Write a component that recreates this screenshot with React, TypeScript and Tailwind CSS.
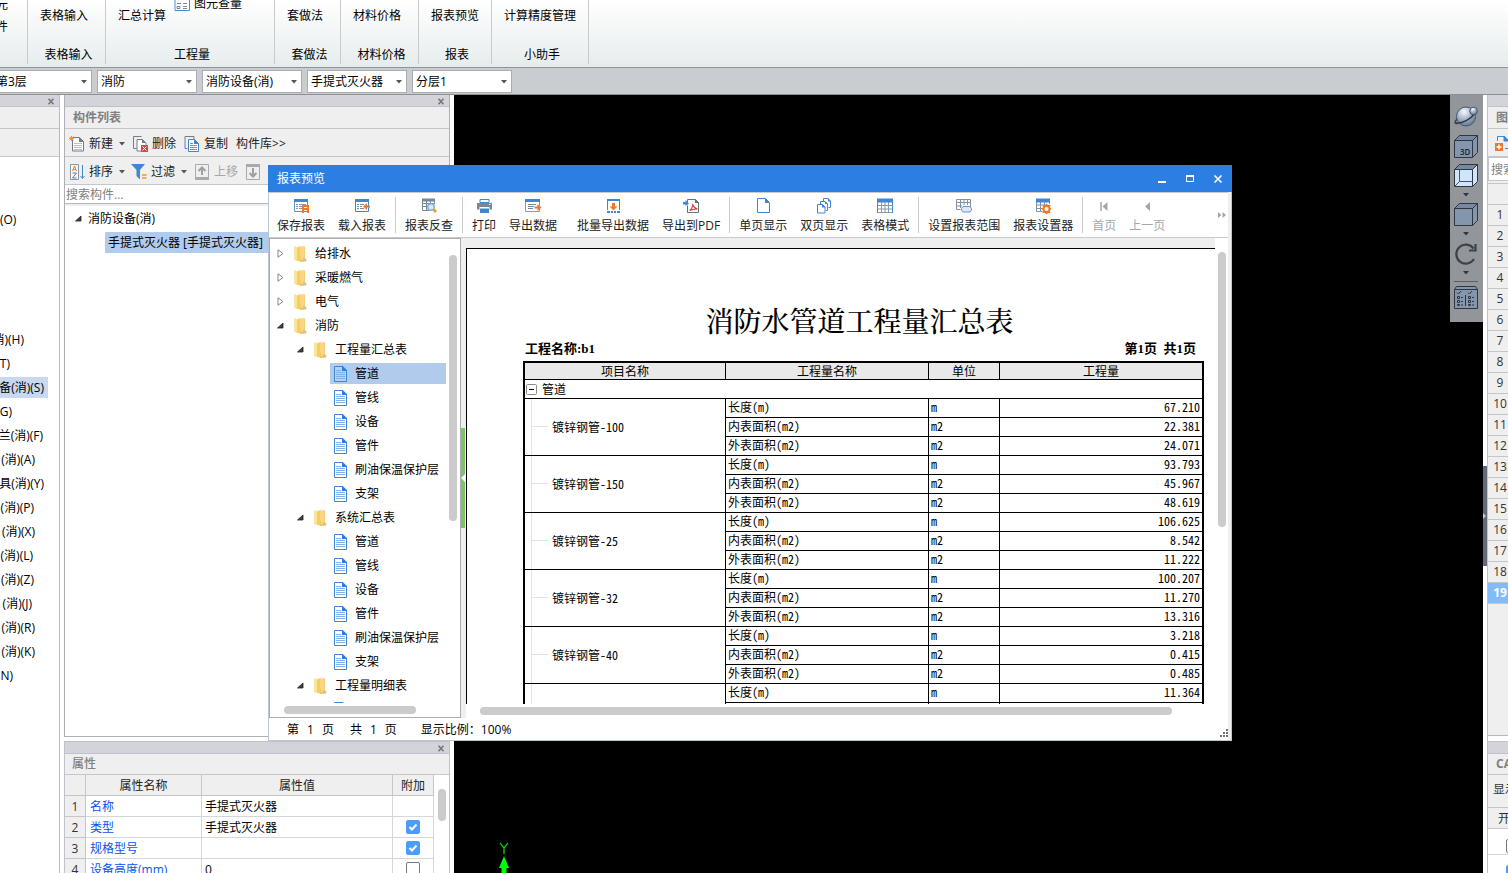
import { Fragment } from 'react';
import type { ReactNode } from 'react';
import clsx from 'clsx';

interface RibbonGroup {
  item: string;
  label: string;
  width: string;
}

interface CategoryRow {
  text: string;
  end: number;
  selected?: boolean;
}

interface TreeNode {
  level: 0 | 1 | 2;
  text: string;
  open?: boolean;
  selected?: boolean;
}

interface PipeGroup {
  name: string;
  values: string[];
}

const ribbonGroups: RibbonGroup[] = [
  { item: '表格输入', label: '表格输入', width: 'w-[78px]' },
  { item: '汇总计算', label: '工程量', width: 'w-[169px]' },
  { item: '套做法', label: '套做法', width: 'w-[66px]' },
  { item: '材料价格', label: '材料价格', width: 'w-[78px]' },
  { item: '报表预览', label: '报表', width: 'w-[73px]' },
  { item: '计算精度管理', label: '小助手', width: 'w-[97px]' },
];

const filters = ['第3层', '消防', '消防设备(消)', '手提式灭火器', '分层1'];

// The navigator is scrolled sideways, so only the tail of each name shows
const categories: CategoryRow[] = [
  { text: '消)(H)', end: 24 },
  { text: 'T)', end: 10 },
  { text: '备(消)(S)', end: 44, selected: true },
  { text: 'G)', end: 12 },
  { text: '兰(消)(F)', end: 43 },
  { text: '(消)(A)', end: 35 },
  { text: '具(消)(Y)', end: 44 },
  { text: '(消)(P)', end: 34 },
  { text: '(消)(X)', end: 35 },
  { text: '(消)(L)', end: 33 },
  { text: '(消)(Z)', end: 34 },
  { text: '(消)(J)', end: 32 },
  { text: '(消)(R)', end: 35 },
  { text: '(消)(K)', end: 35 },
  { text: 'N)', end: 13 },
];

const reportTree: TreeNode[] = [
  { level: 0, text: '给排水' },
  { level: 0, text: '采暖燃气' },
  { level: 0, text: '电气' },
  { level: 0, text: '消防', open: true },
  { level: 1, text: '工程量汇总表', open: true },
  { level: 2, text: '管道', selected: true },
  { level: 2, text: '管线' },
  { level: 2, text: '设备' },
  { level: 2, text: '管件' },
  { level: 2, text: '刷油保温保护层' },
  { level: 2, text: '支架' },
  { level: 1, text: '系统汇总表', open: true },
  { level: 2, text: '管道' },
  { level: 2, text: '管线' },
  { level: 2, text: '设备' },
  { level: 2, text: '管件' },
  { level: 2, text: '刷油保温保护层' },
  { level: 2, text: '支架' },
  { level: 1, text: '工程量明细表', open: true },
  { level: 2, text: '' },
];

const measures = [
  { name: '长度(m)', unit: 'm' },
  { name: '内表面积(m2)', unit: 'm2' },
  { name: '外表面积(m2)', unit: 'm2' },
];

const pipes: PipeGroup[] = [
  { name: '镀锌钢管-100', values: ['67.210', '22.381', '24.071'] },
  { name: '镀锌钢管-150', values: ['93.793', '45.967', '48.619'] },
  { name: '镀锌钢管-25', values: ['106.625', '8.542', '11.222'] },
  { name: '镀锌钢管-32', values: ['100.207', '11.270', '13.316'] },
  { name: '镀锌钢管-40', values: ['3.218', '0.415', '0.485'] },
];

const properties = [
  { name: '名称', value: '手提式灭火器', extra: null },
  { name: '类型', value: '手提式灭火器', extra: true },
  { name: '规格型号', value: '', extra: true },
  { name: '设备高度(mm)', value: '0', extra: false },
];

function Caret({ className = 'fill-[#555]' }: { className?: string }) {
  return (
    <svg width="6" height="4" viewBox="0 0 6 4" className={className}>
      <path d="M0 0h6L3 3.5z" />
    </svg>
  );
}

function SmallX() {
  return (
    <svg width="8" height="7" viewBox="0 0 8 7" className="stroke-[#777]" fill="none" strokeWidth="1.6">
      <path d="M1.5 .8l5 5.400M6.500 .8l-5 5.400" />
    </svg>
  );
}

function CheckBox({ label, checked }: { label: string; checked: boolean }) {
  return (
    <div className="relative size-[14px] shrink-0">
      <input
        type="checkbox"
        aria-label={label}
        defaultChecked={checked}
        className="peer block size-[14px] appearance-none rounded-xs border border-[#777] bg-white checked:border-[#4a9df8] checked:bg-[#4a9df8]"
      />
      <svg
        width="14"
        height="14"
        viewBox="0 0 14 14"
        fill="none"
        className="pointer-events-none absolute top-0 left-0 hidden stroke-white stroke-2 peer-checked:block"
      >
        <path d="M3.500 7l2.500 2.500L10.500 4.500" />
      </svg>
    </div>
  );
}

function PanelStrip() {
  return (
    <div className="flex h-3 shrink-0 items-center justify-end border-b border-[#bfc2c9] bg-[#d3d4d9] pt-px pr-1">
      <button aria-label="关闭">
        <SmallX />
      </button>
    </div>
  );
}

function TreeArrow({ open }: { open?: boolean }) {
  return (
    <svg width="7" height="9" viewBox="0 0 7 9" className="shrink-0">
      {open ? (
        <path d="M6 2v5H.5z" fill="#404040" stroke="#222" strokeWidth=".8" />
      ) : (
        <path d="M1 .8v7.4l5-3.7z" fill="#fff" stroke="#858585" />
      )}
    </svg>
  );
}

function FolderIcon() {
  return (
    <svg width="13" height="16" viewBox="0 0 13 16" className="shrink-0">
      <path d="M4 .5h7v11.500l1.500 2-.5 1.500-6 .5z" fill="#eec36a" />
      <path d="M5 1h5.500v10.500L7 15z" fill="#fbd582" />
      <path d="M.5 .5L6 2v13.500L.5 14z" fill="#f3d066" />
      <path d="M.5 .5L3 1.200v13.400L.5 14z" fill="#fae794" />
      <path d="M10.500 11.500l2 3.500H8.500z" fill="#d3c293" />
    </svg>
  );
}

function DocIcon({ selected }: { selected?: boolean }) {
  return (
    <svg width="13" height="16" viewBox="0 0 13 16" className="shrink-0" fill="none">
      <path d="M.5.5H8.5l4 4v11H.5z" fill={selected ? '#b4d0f2' : '#fff'} stroke="#3f86d3" />
      <path d="M8 0h.8L13 4.2V5H8z" fill="#2f7fd6" />
      <path d="M2 4.5h5M2 6.5h9M2 8.5h9M2 10.5h9M2 12.5h9" stroke="#7fb0e6" />
    </svg>
  );
}

const reportIcons: Record<string, ReactNode> = {
  save: (
    <>
      <path d="M1.5 1.5h13v12h-13z" stroke="#6f8faf" />
      <path d="M1 2.5h14" stroke="#3f86d3" strokeWidth="3" />
      <path d="M3 6.5h2M6 6.5h7M3 8.5h2M6 8.5h4M3 10.5h2M6 10.5h3" stroke="#8b98a5" />
      <path d="M9 7h7v8h-2v-3h-3v3H9z" fill="#f0782a" />
      <path d="M11 9.5h3" stroke="#fff" />
    </>
  ),
  load: (
    <>
      <path d="M1.5 1.5h13v12h-13z" stroke="#3f86d3" />
      <path d="M1 2.5h14" stroke="#3f86d3" strokeWidth="3" />
      <path d="M3 6.5h2M6 6.5h4M3 8.5h2M6 8.5h2M3 10.5h2M6 10.5h4" stroke="#7b8794" />
      <path d="M9 8.5L13 5v2.5h3v2h-3V12z" fill="#f0782a" />
    </>
  ),
  check: (
    <>
      <path d="M1 2h13" stroke="#7b8794" strokeWidth="3" />
      <path d="M1.5 1v11.500h7M5.500 3v9M9.500 3v3M13.500 3v3M1 5.500h13M1 8.500h5" stroke="#7b8794" />
      <circle cx="10" cy="9" r="3.300" fill="#dbe9fa" stroke="#7fa8de" strokeWidth="1.400" />
      <path d="M13.500 10.500l2.500 2.500-2 2-2.500-2.500z" fill="#f5961d" />
    </>
  ),
  print: (
    <>
      <path d="M4 1.500h9v3H4z" stroke="#3f86d3" />
      <path d="M1 5h15v6.500h-2.500V9h-10v2.500H1z" fill="#7b8794" />
      <path d="M4 10.500h9v4.500H4z" fill="#3f86d3" />
      <path d="M13 6.500h1.500" stroke="#fff" />
    </>
  ),
  exportData: (
    <>
      <path d="M.5 1.500h14v12H.5z" stroke="#6fa3df" />
      <path d="M0 2.500h15" stroke="#3f86d3" strokeWidth="3" />
      <path d="M3 6.500h8M3 8.500h6M3 10.500h5" stroke="#7b8794" />
      <path d="M16.500 9.500L12.500 6v2.500h-3v2h3V13z" fill="#f0782a" />
    </>
  ),
  exportBatch: (
    <>
      <path d="M2.500 1v11M14.500 1v11" stroke="#3f86d3" />
      <path d="M2 2h13" stroke="#3f86d3" strokeWidth="2" />
      <path d="M2 14h3M6 14h2M9 14h2M12 14h3" stroke="#3f86d3" strokeWidth="2" />
      <path d="M8.500 12.500l4-4h-2.500V5H7v3.500H4.500z" fill="#f0782a" />
    </>
  ),
  pdf: (
    <>
      <path d="M4.500 7.500v7h11V4.500l-3-3H4.500V4" stroke="#6a6f76" />
      <path d="M12 1v4h4z" fill="#6a6f76" />
      <path d="M0 4h2.500V2L6 5.500 2.500 8V6.500H0z" fill="#3f86d3" />
      <path d="M6.500 12.500c2-1 3.500-4 3-6.500 1 3 2.500 4.500 5 4.800-2.500 0-5.500.3-8 1.700z" stroke="#e0454a" strokeWidth="1.200" />
    </>
  ),
  single: (
    <>
      <path d="M2.500.500h8l4 4v10h-12z" stroke="#3f86d3" />
      <path d="M10 0l5 5h-5z" fill="#3f86d3" />
    </>
  ),
  double: (
    <>
      <path d="M7.500 3V.500h4.500l2.500 2.500v6.500h-2" stroke="#3f86d3" />
      <path d="M4.500 6V3.500H9l2.500 2.500v6.500H10" stroke="#3f86d3" />
      <path d="M1.500 6.500h5l2.500 2.500v6H1.500z" fill="#fff" stroke="#3f86d3" />
      <path d="M6 6l4 3.500H6zM9 3l3 3H9zM12 0l3 3.500h-3z" fill="#3f86d3" />
    </>
  ),
  grid: (
    <>
      <path d="M4.500 4v10M8 4v10M11.500 4v10M1 7.500h14M1 11h14M0 14.500h16" stroke="#8b98a5" />
      <path d="M.5 1v14M15.500 1v14" stroke="#3f86d3" />
      <path d="M0 2.500h16" stroke="#3f86d3" strokeWidth="4" />
    </>
  ),
  range: (
    <>
      <path d="M.5 1.500h14v8M.5 1.500v10h4M4.500 1v9M8 1v6M11.500 1v6M1 4.500h14M1 8h5" stroke="#8290a0" />
      <path d="M7 8.500h7l1.500 2v1.500l-1.500 2H7l-1.500-2v-1.500z" fill="#dbe9fa" stroke="#5f98dc" />
    </>
  ),
  settings: (
    <>
      <path d="M1.500 3v10.500h6M5.500 4v9M9.500 4v4M14.500 3v3M1 7h9M1 10.500h6" stroke="#8290a0" />
      <path d="M1 2.500h14" stroke="#3f86d3" strokeWidth="4" />
      <path d="M11.500 5.500l1.500 1.500h2.500l-.5 2.300L16.500 11l-1.500 1.500.5 2.500H13l-1.500 1.500L10 15H7.500l.5-2.500L6.500 11 8 9.300 7.500 7H10z" fill="#f0782a" />
      <circle cx="11.500" cy="11" r="2" fill="#fff" />
    </>
  ),
  first: (
    <>
      <path d="M5 4v9" stroke="#a3a7ab" strokeWidth="1.500" />
      <path d="M11.500 4v9L6.500 8.500z" fill="#a3a7ab" />
    </>
  ),
  previous: <path d="M11 4v9L6 8.500z" fill="#a3a7ab" />,
};

// 'sep' draws a divider, 'space' leaves a small hole in the bar
const reportTools: { icon: string; text?: string; disabled?: boolean }[] = [
  { icon: 'save', text: '保存报表' },
  { icon: 'load', text: '载入报表' },
  { icon: 'sep' },
  { icon: 'check', text: '报表反查' },
  { icon: 'sep' },
  { icon: 'print', text: '打印' },
  { icon: 'exportData', text: '导出数据' },
  { icon: 'space' },
  { icon: 'exportBatch', text: '批量导出数据' },
  { icon: 'pdf', text: '导出到PDF' },
  { icon: 'sep' },
  { icon: 'single', text: '单页显示' },
  { icon: 'double', text: '双页显示' },
  { icon: 'grid', text: '表格模式' },
  { icon: 'sep' },
  { icon: 'range', text: '设置报表范围' },
  { icon: 'settings', text: '报表设置器' },
  { icon: 'sep' },
  { icon: 'first', text: '首页', disabled: true },
  { icon: 'previous', text: '上一页', disabled: true },
];

function Ribbon() {
  return (
    <header className="flex h-[68px] shrink-0 border-b border-[#8f949a] bg-linear-to-b from-white to-[#e6ecec]">
      <div className="mb-[3px] w-7 overflow-hidden border-r border-[#c8cacc] leading-[22px]">
        <div className="-mt-1.5 -ml-1">元</div>
        <div className="-ml-1">件</div>
      </div>
      {ribbonGroups.map((group, index) => (
        <div
          key={group.label}
          className={clsx('mb-[3px] flex shrink-0 flex-col justify-between border-r border-[#c8cacc]', group.width)}
        >
          <div className="flex gap-2 pl-3">
            <button className="mt-[7px] flex h-[18px] items-center whitespace-nowrap">{group.item}</button>
            {index === 1 && (
              <button className="-mt-1.5 flex h-5 items-center gap-1">
                <svg width="16" height="14" viewBox="0 0 16 14" fill="none">
                  <path d="M1 .5h14.500v13H1z" fill="#fff" stroke="#4a8fd8" />
                  <path d="M3 6.500h4M9 6.500h4M3 9.500h3v2H3zM9 9.500h4M9 11.500h4" stroke="#7b8794" />
                </svg>
                图元查量
              </button>
            )}
          </div>
          <div className="flex h-[19px] items-center justify-center pl-1">{group.label}</div>
        </div>
      ))}
    </header>
  );
}

function FilterBar() {
  return (
    <div className="flex h-[27px] shrink-0 items-center border-b border-[#8c9095] bg-[#c9cdd2]">
      <div className="-ml-2 flex gap-[5px]">
        {filters.map(name => (
          <div key={name} className="relative">
            <select
              aria-label={name}
              className="block h-[23px] w-[100px] appearance-none border border-[#a9acb0] bg-white pt-0.5 pl-[3px] text-xs outline-none"
            >
              <option>{name}</option>
            </select>
            <span className="pointer-events-none absolute top-[10px] right-[5px]">
              <Caret />
            </span>
          </div>
        ))}
      </div>
    </div>
  );
}

function Navigator() {
  return (
    <aside className="flex w-[60px] shrink-0 flex-col overflow-hidden border-r border-[#b9bcc2] bg-white">
      <PanelStrip />
      <div className="h-[22px] shrink-0 border-b border-[#c3c6ca] bg-[#efefef]" />
      <div className="h-7 shrink-0 border-b border-[#c3c6ca] bg-[#efefef]" />
      <div className="mt-[52px] h-[21px] shrink-0 leading-[21px]">(O)</div>
      <ul className="mt-[99px] flex flex-col gap-[3px]">
        {categories.map(row => (
          <li
            key={row.text}
            className={clsx(
              'flex h-[21px] shrink-0 items-center justify-end pr-1 whitespace-nowrap',
              row.selected && 'bg-[#c8d8ee]'
            )}
            style={{ width: row.end + 4 }}
          >
            {row.text}
          </li>
        ))}
      </ul>
    </aside>
  );
}

function ComponentList() {
  return (
    <section className="flex h-[642px] shrink-0 flex-col border border-t-0 border-[#aeb0b4] bg-white text-[#222]">
      <PanelStrip />
      <h2 className="flex h-[22px] shrink-0 items-center border-b border-[#c3c6ca] bg-[#efefef] pl-2 font-bold text-[#808080]">
        构件列表
      </h2>
      <div className="flex h-7 shrink-0 items-center border-b border-[#c3c6ca] bg-[#efefef] pt-0.5 pl-1">
        <button className="flex items-center gap-1">
          <svg width="16" height="16" viewBox="0 0 16 16" fill="none">
            <path d="M3.500 1.500h7l4 4v9.500h-11z" fill="#fff" stroke="#737e8a" />
            <path d="M10 1l5 5h-5z" fill="#737e8a" />
            <path d="M5 7.500h8M5 9.500h8M5 11.500h8M5 13.500h8" stroke="#b9c0c7" />
            <path d="M2.500 0v5M0 2.500h5M.7.700l3.600 3.600M4.300.700L.7 4.300" stroke="#f5961d" />
          </svg>
          新建
        </button>
        <span className="ml-1.5">
          <Caret />
        </span>
        <button className="ml-2 flex items-center gap-[3px]">
          <svg width="16" height="16" viewBox="0 0 16 16" fill="none">
            <path d="M3.500 12.500h-3V.500h8" stroke="#737e8a" />
            <path d="M4 3.500h5.500l3.500 3.500v8H4z" fill="#fff" stroke="#737e8a" />
            <path d="M9 3l4 4H9z" fill="#737e8a" />
            <path d="M8 9h7v7H8z" fill="#d94545" />
            <path d="M9.500 10.500l4 4M13.500 10.500l-4 4" stroke="#fff" />
          </svg>
          删除
        </button>
        <button className="ml-2 flex items-center gap-1">
          <svg width="16" height="16" viewBox="0 0 16 16" fill="none">
            <path d="M3.500 12.500H1V.500h9V3" stroke="#737e8a" />
            <path d="M4.500 3.500h6l4 4v8h-10z" fill="#fff" stroke="#3f86d3" />
            <path d="M10 3l5 5h-5z" fill="#3f86d3" />
            <path d="M6 7.500h3M6 9.500h7M6 11.500h7M6 13.500h7" stroke="#5f98dc" />
          </svg>
          复制
        </button>
        <button className="ml-2 text-xs">构件库&gt;&gt;</button>
      </div>
      <div className="flex h-7 shrink-0 items-center border-b border-[#c3c6ca] bg-[#efefef] pt-0.5 pl-1">
        <button className="flex items-center gap-1">
          <svg width="16" height="16" viewBox="0 0 16 16" fill="none">
            <path d="M1.500.500h8v15h-8z" fill="#f7f7f7" stroke="#8b98a5" />
            <path d="M3.500 7l2-5 2 5M4.300 5.500h2.400" stroke="#f0782a" />
            <path d="M3.500 9h4l-4 5h4" stroke="#737e8a" />
            <path d="M13.500 1v13M11.500 12l2 2.500 2-2.500" stroke="#3f86d3" />
          </svg>
          排序
        </button>
        <span className="ml-1.5">
          <Caret />
        </span>
        <button className="ml-1.5 flex items-center gap-1">
          <svg width="16" height="16" viewBox="0 0 16 16" fill="none">
            <path d="M0 0h14L9 6v9.500L5.500 12V6z" fill="#3f86d3" />
            <path d="M11 11h4.500M11 14h4.500" stroke="#f5961d" strokeWidth="1.500" />
          </svg>
          过滤
        </button>
        <span className="ml-1.5">
          <Caret />
        </span>
        <button className="ml-2 flex items-center gap-[5px] text-[#a5a8ab]" disabled>
          <svg width="14" height="16" viewBox="0 0 14 16" fill="none">
            <path d="M.5.500h13v15H.5z" stroke="#a8abae" />
            <path d="M0 14.500h14" stroke="#a8abae" strokeWidth="3" />
            <path d="M7 11V4M3.500 7L7 3.500 10.500 7" stroke="#9da0a3" strokeWidth="2" />
          </svg>
          上移
        </button>
        <button aria-label="下移" className="ml-2" disabled>
          <svg width="14" height="16" viewBox="0 0 14 16" fill="none">
            <path d="M.5.500h13v15H.5z" stroke="#a8abae" />
            <path d="M0 1.500h14" stroke="#a8abae" strokeWidth="3" />
            <path d="M7 4v8M3.500 9L7 12.500 10.500 9" stroke="#9da0a3" strokeWidth="2" />
          </svg>
        </button>
      </div>
      <input
        aria-label="搜索构件"
        placeholder="搜索构件..."
        className="h-[19px] shrink-0 border-b border-[#b5b7ba] pt-px pl-px text-xs outline-none placeholder:text-[#808080]"
      />
      <ul className="border-t-2 border-[#efefef] pt-0.5 text-black">
        <li className="flex h-[21px] items-center gap-1.5 pl-[10px]">
          <TreeArrow open />
          消防设备(消)
        </li>
        <li className="mt-[3px] ml-10 flex h-[21px] items-center bg-[#b1cbec] pl-[3px]">手提式灭火器 [手提式灭火器]</li>
      </ul>
    </section>
  );
}

function Properties() {
  return (
    <section className="flex flex-1 flex-col overflow-hidden border border-b-0 border-[#bfc2c9] bg-white">
      <PanelStrip />
      <h2 className="flex h-[21px] shrink-0 items-center border-b border-[#c3c6ca] bg-[#efefef] pl-[7px] font-medium text-[#808080]">
        属性
      </h2>
      <div className="flex">
        <table className="flex-1 table-fixed border-separate border-spacing-0">
          <thead>
            <tr className="h-[21px] bg-[#efefef] text-[#222]">
              <th className="w-[21px] border-r border-b border-[#c3c6ca]" />
              <th className="w-[116px] border-r border-b border-[#c3c6ca] p-0 pt-0.5 font-normal">属性名称</th>
              <th className="w-[191px] border-r border-b border-[#c3c6ca] p-0 pt-0.5 font-normal">属性值</th>
              <th className="border-r border-b border-[#c3c6ca] p-0 pt-0.5 font-normal">附加</th>
            </tr>
          </thead>
          <tbody>
            {properties.map((row, index) => (
              <tr key={row.name} className="h-[21px]">
                <td className="border-r border-b border-[#c3c6ca] bg-[#efefef] p-0 pt-0.5 text-center text-[#333]">
                  {index + 1}
                </td>
                <td className="border-r border-b border-[#d4d6d9] p-0 pt-0.5 pl-1 text-[#0a53f0]">{row.name}</td>
                <td className="border-r border-b border-[#d4d6d9] p-0 pt-0.5 pl-[3px]">{row.value}</td>
                <td className="border-r border-b border-[#d4d6d9] p-0">
                  {row.extra !== null && (
                    <div className="flex justify-center">
                      <CheckBox label={row.name} checked={row.extra} />
                    </div>
                  )}
                </td>
              </tr>
            ))}
          </tbody>
        </table>
        <div className="w-[15px] shrink-0 pt-[14px] pl-1">
          <div className="h-8 w-2 rounded-full bg-[#cbcbcb]" />
        </div>
      </div>
    </section>
  );
}

function Cube({ children, fill = '#8396ad' }: { children?: ReactNode; fill?: string }) {
  return (
    <svg width="24" height="23" viewBox="0 0 24 23" fill="none" stroke="#30363f">
      <path d="M.5 5.500l5-5h18v17l-5 5H.5z" fill={fill} />
      <path d="M.5 5.500l5-5h18l-5 5z" fill="#7489a2" />
      <path d="M18.500 5.500v17M18.500 5.500l5-5" />
      {children}
    </svg>
  );
}

function ViewTools() {
  const caret = <Caret className="my-1.5 shrink-0 fill-[#30363f]" />;

  return (
    <div className="flex h-[227px] w-[33px] flex-col items-center bg-[#929599] pt-[10px] pr-px">
      <button aria-label="动态观察">
        <svg width="24" height="23" viewBox="0 0 24 23" fill="none">
          <defs>
            <radialGradient id="ball" cx=".4" cy=".25" r=".8">
              <stop offset="0" stopColor="#f4f9ff" />
              <stop offset=".5" stopColor="#a3b6ca" />
              <stop offset="1" stopColor="#5a738e" />
            </radialGradient>
          </defs>
          <path d="M4 13c-4 4-4 6 0 5.500" stroke="#30363f" strokeWidth="1.200" />
          <circle cx="12" cy="11.500" r="9.500" fill="url(#ball)" stroke="#46566a" />
          <path d="M2 18c6 1 15-4 19-10" stroke="#30363f" strokeWidth="1.400" />
          <circle cx="19.500" cy="6" r="3.800" fill="url(#ball)" stroke="#46566a" />
        </svg>
      </button>
      <button aria-label="三维" className="mt-[7px]">
        <Cube>
          <text x="6" y="20" fontSize="8" fill="#20262e" stroke="none" className="font-['Open_Sans',sans-serif] font-semibold">
            3D
          </text>
        </Cube>
      </button>
      <button aria-label="俯视" className="mt-1.5">
        <Cube fill="#cfe5fb">
          <path d="M5.500 5.500v12h13M5.500 17.500l-5 5" stroke="#46566a" />
        </Cube>
      </button>
      {caret}
      <button aria-label="线框">
        <Cube />
      </button>
      {caret}
      <button aria-label="旋转">
        <svg width="24" height="23" viewBox="0 0 24 23" fill="none" stroke="#3b424c" strokeWidth="2.200">
          <path d="M19.500 6.500A9.500 9.500 0 1 0 20 17" />
          <path d="M21.500 2v6.500H15" />
        </svg>
      </button>
      {caret}
      <div className="h-px w-6 shrink-0 bg-[#5b5f64]" />
      <button aria-label="显示设置" className="mt-1">
        <svg width="24" height="23" viewBox="0 0 24 23" fill="none" stroke="#30363f">
          <path d="M.5 3.500l2-3h19l2 3v19H.5z" fill="#8396ad" />
          <path d="M.5 3.500h23M11.500 9v11" />
          <path d="M3 6.500l1.500 1.500L7 5M14 6.500l1.500 1.500L18 5M3.500 10.500h2v2h-2zM3.500 14.500h2v2h-2zM3.500 18.500h2v1h-2zM14.500 10.500h2v2h-2zM14.500 14.500h2v2h-2zM14.500 18.500h2v1h-2zM7 11.500h2M7 15.500h2M7 19h2M18 11.500h2M18 15.500h2M18 19h2" />
        </svg>
      </button>
    </div>
  );
}

function RightPanel() {
  return (
    <aside className="flex w-[21px] shrink-0 flex-col overflow-hidden">
      <div className="flex w-20 flex-1 flex-col border-l border-[#bfc2c9] bg-[#efefef]">
        <PanelStrip />
        <h2 className="flex h-[22px] shrink-0 items-center border-b border-[#c3c6ca] pl-2 font-bold text-[#808080]">图</h2>
        <div className="flex h-7 shrink-0 items-center border-b border-[#c3c6ca] pl-[7px]">
          <button aria-label="添加图纸">
            <svg width="18" height="16" viewBox="0 0 18 16" fill="none">
              <path d="M2.500 6V1.500h7l4 4v3" stroke="#3f86d3" />
              <path d="M9 1l5 5H9zM10 13.500h6" fill="#3f86d3" stroke="#3f86d3" />
              <path d="M0 8h8v8H0z" fill="#f0782a" />
              <path d="M4 9.500v5M1.500 12h5" stroke="#fff" strokeWidth="1.500" />
            </svg>
          </button>
        </div>
        <input
          aria-label="搜索图纸"
          placeholder="搜索"
          className="h-6 shrink-0 border border-[#c3c6ca] bg-white pl-0.5 text-xs outline-none placeholder:text-[#808080]"
        />
        <ol className="mt-0.5 flex-1 border-t border-[#c3c6ca] text-center text-[#333]">
          <li className="h-[21px] w-6 border-b border-[#c3c6ca]" />
          {Array.from({ length: 19 }, (_, i) => (
            <li
              key={i}
              className={clsx(
                'h-[21px] w-6 border-b border-[#c3c6ca] leading-5',
                i === 18 && 'bg-[#80bcfb] font-bold text-white'
              )}
            >
              {i + 1}
            </li>
          ))}
        </ol>
        <div className="h-1.5 shrink-0 border-t border-[#b5b7ba] bg-white" />
        <div className="flex h-[132px] shrink-0 flex-col border-t border-[#bfc2c9]">
          <PanelStrip />
          <h2 className="flex h-[21px] shrink-0 items-center border-b border-[#c3c6ca] pl-2 font-bold text-[#808080]">CA</h2>
          <div className="flex h-[33px] shrink-0 items-center border-b border-[#c3c6ca] pl-[5px] pb-0.5 text-[#333]">显示</div>
          <div className="flex h-[21px] shrink-0 items-center border-b border-[#c3c6ca] pt-0.5 pl-[10px] text-[#333]">开</div>
          <div className="flex h-[26px] shrink-0 items-center border-b border-[#d4d6d9] bg-white pt-2 pl-[18px]">
            <CheckBox label="开关一" checked={false} />
          </div>
          <div className="flex h-[26px] shrink-0 items-center bg-white pt-2 pl-[18px]">
            <CheckBox label="开关二" checked />
          </div>
        </div>
      </div>
    </aside>
  );
}

function ReportTree() {
  return (
    <nav className="flex w-48 shrink-0 flex-col border border-[#a9abaf] bg-white">
      <div className="flex min-h-0 flex-1">
        <ul className="flex flex-1 flex-col gap-[3px] overflow-hidden pt-1">
          {reportTree.map((node, index) => (
            <li
              key={index}
              className={clsx(
                'flex h-[21px] shrink-0 items-center gap-2 whitespace-nowrap',
                node.level === 0 && 'pl-[7px]',
                node.level === 1 && 'pl-[27px]',
                node.level === 2 && 'ml-[60px] pl-1',
                node.selected && 'bg-[#b1cbec]'
              )}
            >
              {node.level < 2 ? (
                <span className="flex items-center gap-[10px]">
                  <TreeArrow open={node.open} />
                  <FolderIcon />
                </span>
              ) : (
                <DocIcon selected={node.selected} />
              )}
              {node.text}
            </li>
          ))}
        </ul>
        <div className="w-[14px] pt-4 pl-[3px]">
          <div className="h-[266px] w-2 rounded-full bg-[#cbcbcb]" />
        </div>
      </div>
      <div className="h-[14px] shrink-0 pt-[3px] pl-[14px]">
        <div className="h-2 w-[132px] rounded-full bg-[#cbcbcb]" />
      </div>
    </nav>
  );
}

function ReportTable() {
  return (
    <table className="w-full table-fixed border-separate border-spacing-0 border-2 border-black font-['Noto_Sans_Mono_CJK_SC','Noto_Sans_CJK_SC',monospace] leading-4">
      <thead>
        <tr className="h-[17px] bg-[#e9e9e9]">
          <th className="w-[201px] border-r border-b border-black p-0 font-normal">项目名称</th>
          <th className="w-[203px] border-r border-b border-black p-0 font-normal">工程量名称</th>
          <th className="w-[71px] border-r border-b border-black p-0 font-normal">单位</th>
          <th className="border-b border-black p-0 font-normal">工程量</th>
        </tr>
      </thead>
      <tbody>
        <tr className="h-[19px]">
          <td colSpan={4} className="border-b border-black p-0">
            <div className="flex h-[18px] items-center gap-[5px] pl-px">
              <button aria-label="折叠">
                <svg width="11" height="11" viewBox="0 0 11 11" fill="none">
                  <rect x=".5" y=".5" width="10" height="10" rx="1" stroke="#8a8a8a" />
                  <path d="M3 5.500h5" stroke="#000" />
                </svg>
              </button>
              管道
            </div>
          </td>
        </tr>
        {pipes.map(pipe => (
          <Fragment key={pipe.name}>
            {measures.map((measure, index) => (
              <tr key={measure.name} className="h-[19px]">
                {index === 0 && (
                  <td rowSpan={3} className="border-r border-b border-black p-0 pl-1.5">
                    <div className="flex h-14 items-center gap-1 border-l border-[#e2e2e2] pb-px">
                      <span className="h-px w-4 bg-[#e2e2e2]" />
                      {pipe.name}
                    </div>
                  </td>
                )}
                <td className="border-r border-b border-black p-0 pb-0.5 pl-0.5">{measure.name}</td>
                <td className="border-r border-b border-black p-0 pb-0.5 pl-0.5">{measure.unit}</td>
                <td className="border-b border-black p-0 pr-0.5 pb-0.5 text-right">{pipe.values[index]}</td>
              </tr>
            ))}
          </Fragment>
        ))}
        <tr className="h-[19px]">
          <td rowSpan={2} className="border-r border-black p-0 pl-1.5">
            <div className="h-9 border-l border-[#e2e2e2]" />
          </td>
          <td className="border-r border-b border-black p-0 pb-0.5 pl-0.5">长度(m)</td>
          <td className="border-r border-b border-black p-0 pb-0.5 pl-0.5">m</td>
          <td className="border-b border-black p-0 pr-0.5 pb-0.5 text-right">11.364</td>
        </tr>
        <tr className="h-[19px]">
          <td className="border-r border-black" />
          <td className="border-r border-black" />
          <td />
        </tr>
      </tbody>
    </table>
  );
}

function ReportDialog() {
  return (
    <div
      role="dialog"
      aria-label="报表预览"
      className="absolute top-[165px] left-[268px] flex h-[576px] w-[964px] flex-col bg-white"
    >
      <div className="flex h-[27px] shrink-0 items-center bg-[#2c7fe2] pr-[9px] pl-[9px] text-white">
        <span className="flex-1">报表预览</span>
        <div className="flex gap-[18px]">
          <button aria-label="最小化">
            <svg width="10" height="10" viewBox="0 0 10 10" stroke="#fff" strokeWidth="2">
              <path d="M1 8h8" />
            </svg>
          </button>
          <button aria-label="最大化">
            <svg width="10" height="10" viewBox="0 0 10 10" fill="none" stroke="#fff">
              <path d="M1.500 2.500h7v5h-7z" />
              <path d="M1 2h8" strokeWidth="2" />
            </svg>
          </button>
          <button aria-label="关闭">
            <svg width="10" height="10" viewBox="0 0 10 10" stroke="#fff" strokeWidth="1.700">
              <path d="M1.500 1.500l7 7M8.500 1.500l-7 7" />
            </svg>
          </button>
        </div>
      </div>
      <div className="flex min-h-0 flex-1 flex-col border-x border-b border-[#bcc5d6]">
        <div className="flex min-h-0 flex-1 flex-col border-r-3 border-[#efefef]">
          <div className="flex h-[46px] shrink-0 items-center gap-px border-y border-[#c8cacc] pl-0.5 text-[#222]">
            {reportTools.map((tool, index) => {
              if (tool.icon === 'sep') return <div key={index} className="mx-0.5 h-9 w-px shrink-0 bg-[#c8cacc]" />;
              if (tool.icon === 'space') return <div key={index} className="w-1.5 shrink-0" />;
              return (
                <button
                  key={index}
                  disabled={tool.disabled}
                  className="flex shrink-0 flex-col items-center gap-0.5 px-1.5 pt-0.5 whitespace-nowrap disabled:text-[#a5a8ab]"
                >
                  <svg width="17" height="17" viewBox="0 0 17 17" fill="none">
                    {reportIcons[tool.icon]}
                  </svg>
                  <span className="h-[18px] leading-[18px]">{tool.text}</span>
                </button>
              );
            })}
            <button aria-label="更多" className="mr-0.5 ml-auto">
              <svg width="8" height="6" viewBox="0 0 8 6" fill="#a3a7ab">
                <path d="M0 0l3.500 3L0 6zM4.500 0L8 3 4.500 6z" />
              </svg>
            </button>
          </div>
          <div className="flex min-h-0 flex-1">
            <ReportTree />
            <div className="flex w-[5px] shrink-0 items-start bg-[#efefef] pt-[190px]">
              <div className="flex h-[100px] w-1 items-center bg-[#7cc46c]">
                <svg width="4" height="8" viewBox="0 0 4 8" fill="#fff">
                  <path d="M4 0v8L0 4z" />
                </svg>
              </div>
            </div>
            <div className="flex min-w-0 flex-1 flex-col">
              <div className="flex min-h-0 flex-1">
                <div className="flex flex-1 flex-col bg-[#efefef] pt-[10px]">
                  <div className="min-h-0 flex-1 overflow-hidden border-t border-l border-black bg-white pt-14 pr-[11px] pl-14 font-['Liberation_Serif','Noto_Sans_CJK_SC',serif] text-black">
                    <h1 className="pr-2 text-center font-['Liberation_Serif','Noto_Serif_CJK_SC','Noto_Sans_CJK_SC',serif] text-[28px] leading-9 font-medium">
                      消防水管道工程量汇总表
                    </h1>
                    <div className="mb-[5px] flex justify-between pt-px pr-2 pl-0.5 text-[13px] leading-[14px] font-bold">
                      <span>工程名称:b1</span>
                      <span>第1页&nbsp; 共1页</span>
                    </div>
                    <ReportTable />
                  </div>
                </div>
                <div className="w-[13px] shrink-0 pt-[14px] pl-[3px]">
                  <div className="h-[275px] w-2 rounded-full bg-[#cbcbcb]" />
                </div>
              </div>
              <div className="h-[14px] shrink-0 pt-[3px] pl-[14px]">
                <div className="h-2 w-[692px] rounded-full bg-[#cbcbcb]" />
              </div>
            </div>
          </div>
          <div className="flex h-[22px] shrink-0 items-center pt-0.5 pl-[18px]">
            <div className="flex gap-2">
              <span>第</span>
              <span>1</span>
              <span>页</span>
            </div>
            <div className="ml-4 flex gap-2">
              <span>共</span>
              <span>1</span>
              <span>页</span>
            </div>
            <span className="ml-6 flex-1">显示比例：100%</span>
            <svg width="9" height="9" viewBox="0 0 9 9" fill="#6a6f76" className="mt-1.5 shrink-0">
              <path d="M7 0h2v2H7zM7 3h2v2H7zM7 6h2v2H7zM4 3h2v2H4zM4 6h2v2H4zM1 6h2v2H1z" />
            </svg>
          </div>
        </div>
      </div>
    </div>
  );
}

export default function App() {
  return (
    <div className="relative flex h-screen flex-col overflow-hidden bg-white font-['Open_Sans','Noto_Sans_CJK_SC',sans-serif] text-xs text-black">
      <Ribbon />
      <FilterBar />
      <main className="flex min-h-0 flex-1">
        <Navigator />
        <div className="mx-1 flex w-[386px] shrink-0 flex-col gap-1">
          <ComponentList />
          <Properties />
        </div>
        <div className="flex min-w-0 flex-1 items-start justify-end bg-black">
          <div className="mr-auto ml-[45px] self-end">
            <svg width="10" height="31" viewBox="0 0 10 31" fill="none" stroke="#00f000">
              <path d="M1 1l4 5 4-5M5 6v6" strokeWidth="1.200" />
              <path d="M5 14l5 12H7.500v5h-5v-5H0z" fill="#00ff00" stroke="none" />
            </svg>
          </div>
          <ViewTools />
        </div>
        <div className="w-1 shrink-0 bg-white pt-[371px]">
          <div className="flex h-[100px] items-center bg-[#656b76]">
            <svg width="4" height="6" viewBox="0 0 4 6" fill="#c5c8cc">
              <path d="M0 0l3 3-3 3z" />
            </svg>
          </div>
        </div>
        <RightPanel />
      </main>
      <ReportDialog />
    </div>
  );
}
